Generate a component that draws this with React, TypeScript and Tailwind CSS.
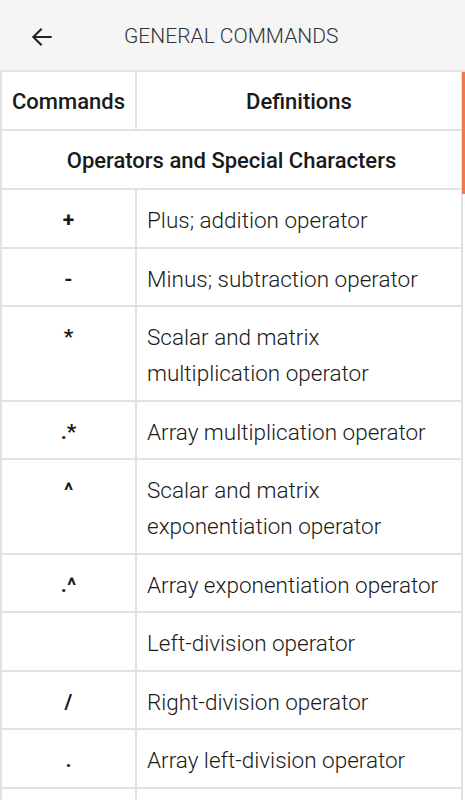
import React from "react";

const rows: { cmd: string; def: string }[] = [
  { cmd: "+", def: "Plus; addition operator" },
  { cmd: "-", def: "Minus; subtraction operator" },
  { cmd: "*", def: "Scalar and matrix multiplication operator" },
  { cmd: ".*", def: "Array multiplication operator" },
  { cmd: "^", def: "Scalar and matrix exponentiation operator" },
  { cmd: ".^", def: "Array exponentiation operator" },
  { cmd: "", def: "Left-division operator" },
  { cmd: "/", def: "Right-division operator" },
  { cmd: ".", def: "Array left-division operator" },
  { cmd: "", def: "" },
];

export default function App() {
  return (
    <div
      className="relative w-[465px] h-[800px] overflow-hidden bg-white text-[#1a1a1a]"
      style={{ fontFamily: "Roboto, 'Noto Sans', sans-serif" }}
    >
      <div className="h-[72px] bg-[#f5f5f5] flex items-center border-b-2 border-[#e2e2e2] pt-[3px]">
        <div className="w-[82px] flex justify-center pl-[2px]">
          <svg width="26" height="26" viewBox="0 0 24 24" fill="none" stroke="#222" strokeWidth="1.9" strokeLinecap="square">
            <path d="M20 12H5" />
            <path d="M11 5l-7 7 7 7" strokeLinejoin="miter" />
          </svg>
        </div>
        <div className="ml-[42px] text-[21px] font-light text-[#333]">GENERAL COMMANDS</div>
      </div>
      <div className="w-[463px] border-l-2 border-r-2 border-[#e2e2e2]">
        <div className="flex border-b-2 border-[#e2e2e2]">
          <div className="w-[135px] shrink-0 border-r-2 border-[#e2e2e2] text-center text-[22px] font-medium leading-[36px] pt-[12px] pb-[9px]">Commands</div>
          <div className="flex-1 text-center text-[22px] font-medium leading-[36px] pt-[12px] pb-[9px]">Definitions</div>
        </div>
        <div className="border-b-2 border-[#e2e2e2] text-center text-[22px] font-medium leading-[36px] pt-[12px] pb-[9px]">
          Operators and Special Characters
        </div>
        {rows.map((r, i) => (
          <div key={i} className="flex border-b-2 border-[#e2e2e2] min-h-[58px]">
            <div className="w-[135px] shrink-0 border-r-2 border-[#e2e2e2] text-center text-[21px] font-bold leading-[36px] pt-[12px] pb-[8.5px]">
              {r.cmd}
            </div>
            <div className="flex-1 pl-[10px] pr-[14px] text-[22.5px] font-light leading-[36px] pt-[12px] pb-[8.5px]">{r.def}</div>
          </div>
        ))}
      </div>
      <div className="absolute right-0 top-[72px] w-[3px] h-[122px] bg-[#f07a4a]" />
    </div>
  );
}
